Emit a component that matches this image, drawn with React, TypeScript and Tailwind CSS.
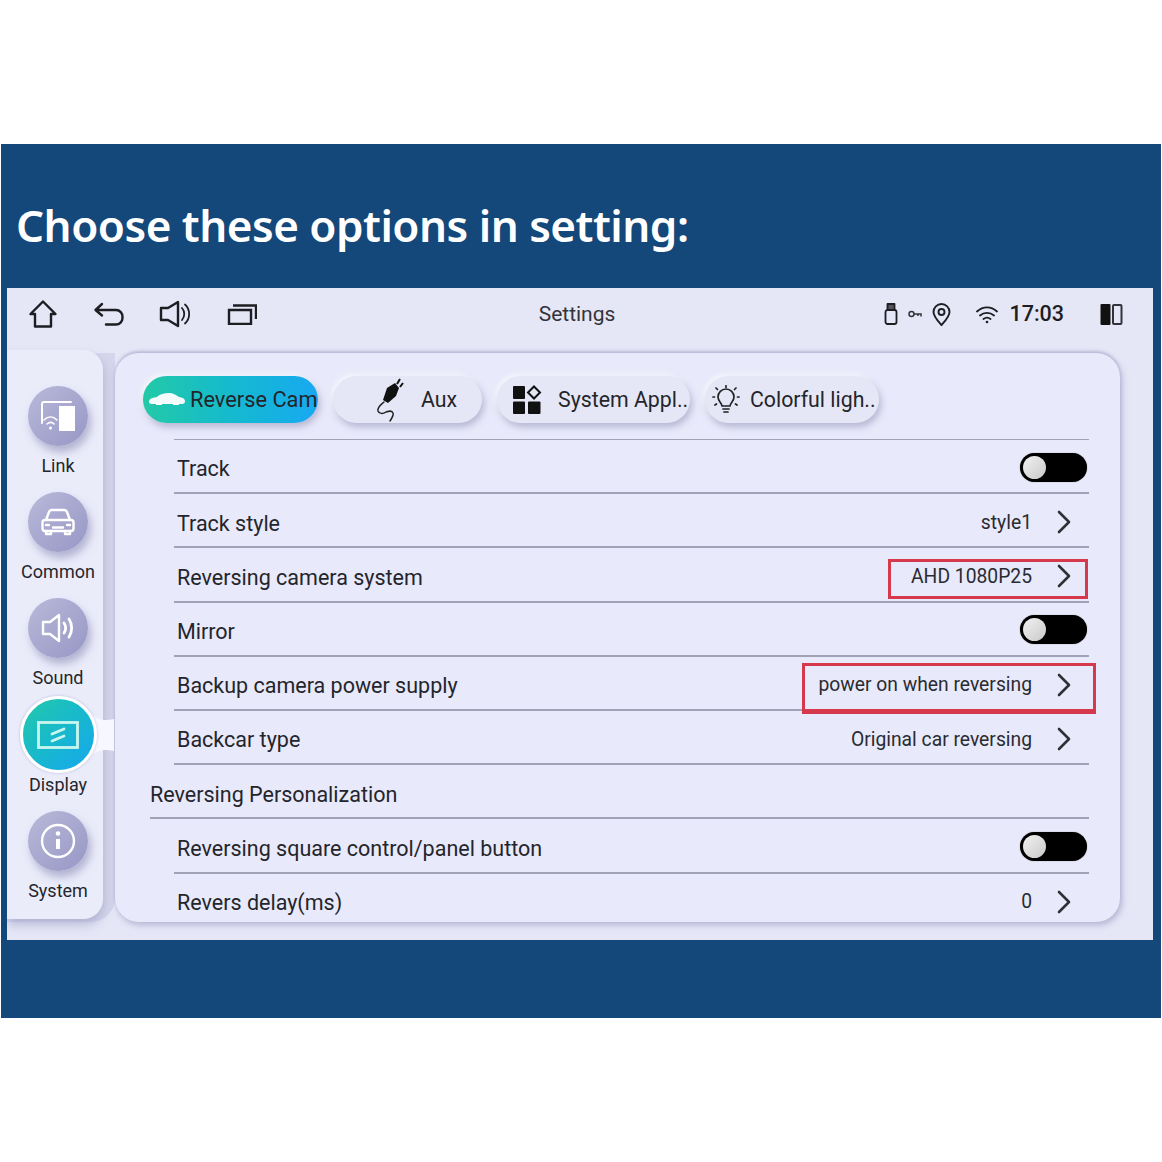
import React from "react";

const Chevron = () => (
  <svg width="16" height="26" viewBox="0 0 16 26" fill="none" stroke="#2f3036" strokeWidth="2.6" strokeLinecap="round" strokeLinejoin="round">
    <path d="M3 3l10 10L3 23" />
  </svg>
);

const Toggle = () => (
  <div className="w-[67px] h-[29px] mt-[2px] rounded-full bg-black flex items-center pl-[3px] shadow-[0_0_1px_#666]">
    <div className="w-[23px] h-[23px] rounded-full bg-gradient-to-br from-[#f2f2f2] to-[#c9c9c9]" />
  </div>
);

const Home = () => (
  <svg width="30" height="30" viewBox="0 0 30 30" fill="none" stroke="#1d1d22" strokeWidth="2.4" strokeLinejoin="round" strokeLinecap="round">
    <path d="M2.5 15L15 2.5 27.5 15H23v12.5H7V15z" />
  </svg>
);
const Back = () => (
  <svg width="32" height="26" viewBox="0 0 32 26" fill="none" stroke="#1d1d22" strokeWidth="2.4" strokeLinejoin="round" strokeLinecap="round">
    <path d="M9 3L2.5 9 9 14.5M3 9h20a6.5 6.5 0 0 1 6.5 7v1a6.5 6.5 0 0 1-6.5 6.5H13" />
  </svg>
);
const Speaker = () => (
  <svg width="32" height="28" viewBox="0 0 32 28" fill="none" stroke="#1d1d22" strokeWidth="2.4" strokeLinejoin="round" strokeLinecap="round">
    <path d="M2 8h7l10-6v24L9 20H2z" />
    <path d="M23 8c3 3.5 3 8.500 0 12M26 4.500c5.500 5 5.500 14 0 19" strokeWidth="1.8" />
  </svg>
);
const Recents = () => (
  <svg width="30" height="22" viewBox="0 0 30 22" fill="none" stroke="#1d1d22" strokeWidth="2.4">
    <path d="M2 7h22v14H2z" />
    <path d="M6 2.500h23V16" />
  </svg>
);
const Usb = () => (
  <svg width="14" height="22" viewBox="0 0 14 22" fill="none" stroke="#1d1d22" strokeWidth="1.8" strokeLinejoin="round">
    <path d="M3.500 1h7v6h-7z" fill="#55565e" />
    <rect x="1.500" y="7" width="11" height="14" rx="2" />
  </svg>
);
const Key = () => (
  <svg width="14" height="8" viewBox="0 0 14 8" fill="none" stroke="#33343a" strokeWidth="1.500">
    <circle cx="3.500" cy="4" r="2.500" />
    <path d="M6 4h7v2.500M10 4v2" />
  </svg>
);
const Pin = () => (
  <svg width="19" height="23" viewBox="0 0 19 23" fill="none" stroke="#1d1d22" strokeWidth="1.900">
    <path d="M9.500 22C5 17 1.500 13.500 1.500 9a8 8 0 0 1 16 0c0 4.500-3.500 8-8 13z" strokeLinejoin="round" />
    <circle cx="9.500" cy="9" r="3" />
  </svg>
);
const Wifi = () => (
  <svg width="22" height="19" viewBox="0 0 22 19" fill="none" stroke="#1d1d22" strokeWidth="1.800" strokeLinecap="round">
    <path d="M1 6.500c6-5.500 14-5.500 20 0M4 10.500c4-3.500 10-3.500 14 0M7.500 14c2-1.500 5-1.500 7 0" />
    <circle cx="11" cy="17" r="1.300" fill="#1d1d22" stroke="none" />
  </svg>
);
const Split = () => (
  <svg width="23" height="23" viewBox="0 0 23 23">
    <rect x="0.500" y="1" width="10" height="21" rx="1" fill="#111" />
    <rect x="13" y="2" width="8.500" height="19" rx="1" fill="none" stroke="#33343a" strokeWidth="2" />
  </svg>
);

const LinkIcon = () => (
  <svg width="40" height="36" viewBox="0 0 40 36" fill="none">
    <path d="M4 25V6a2 2 0 0 1 2-2h27" stroke="#fff" strokeWidth="2" strokeLinecap="round" />
    <rect x="21" y="8" width="16" height="25" fill="#fff" />
    <path d="M6 22c4-4 9-4 13 0M9 26c2.500-2 5-2 7 0" stroke="#fff" strokeWidth="1.600" strokeLinecap="round" />
    <circle cx="12.500" cy="30" r="1.500" fill="#fff" />
  </svg>
);
const CarIcon = () => (
  <svg width="36" height="30" viewBox="0 0 36 30" fill="none" stroke="#fff" strokeWidth="2.400" strokeLinejoin="round" strokeLinecap="round">
    <path d="M6 13l3-8a3 3 0 0 1 3-2h12a3 3 0 0 1 3 2l3 8" />
    <rect x="2.500" y="13" width="31" height="11" rx="2.500" />
    <path d="M6 24v3h5v-3M25 24v3h5v-3M13 20.500h10" />
    <path d="M6 18h3M27 18h3" />
  </svg>
);
const SoundIcon = () => (
  <svg width="34" height="32" viewBox="0 0 34 32" fill="none" stroke="#fff" strokeWidth="2.400" strokeLinejoin="round" strokeLinecap="round">
    <path d="M2 10h7l9-7v26l-9-7H2z" />
    <path d="M23 11c2 3 2 7 0 10M28 7c3.500 5 3.500 13 0 18" strokeWidth="2.800" />
  </svg>
);
const DisplayIcon = () => (
  <svg width="42" height="28" viewBox="0 0 42 28" fill="none" stroke="#c9f5ee">
    <rect x="1.500" y="1.500" width="39" height="25" strokeWidth="2.800" />
    <path d="M15 13l12-5M15 20l12-5" strokeWidth="2.800" strokeLinecap="round" />
  </svg>
);
const InfoIcon = () => (
  <svg width="36" height="36" viewBox="0 0 36 36" fill="none" stroke="#fff">
    <circle cx="18" cy="18" r="16" strokeWidth="2.400" />
    <path d="M18 16v10" strokeWidth="4" />
    <circle cx="18" cy="10.500" r="2.300" fill="#fff" stroke="none" />
  </svg>
);

const WhiteCar = () => (
  <svg width="38" height="16" viewBox="0 0 38 16" fill="#fff">
    <path d="M1 9c1-3 5-3.500 8-4 3-3 7-4 12-4 4 0 7 2 10 4 3 .5 6 1.500 6 4 0 2-1 3-3 3H4C2 12 .5 11 1 9z" opacity="0.95" />
    <path d="M8 13a3 3 0 0 1 6 0zM25 13a3 3 0 0 1 6 0z" />
  </svg>
);
const Plug = () => (
  <svg width="30" height="46" viewBox="0 0 30 46" fill="none">
    <path d="M8 23L12 11 20 6 24 11 21 19 13 26z" fill="#111" />
    <path d="M22 7l3-5M25 10l3-4" stroke="#111" strokeWidth="2" />
    <path d="M9 25c-3 3-7 5-6 9 1 3 5 3 8 1 3-1 6-2 7 1 1 2-1 5-3 8" stroke="#222" strokeWidth="1.500" strokeLinecap="round" />
  </svg>
);
const Blocks = () => (
  <svg width="30" height="30" viewBox="0 0 30 30" fill="#111">
    <rect x="1" y="1" width="12" height="13" rx="1" />
    <rect x="1" y="16.500" width="12" height="12.500" rx="1" />
    <rect x="16" y="16.500" width="12.500" height="12.500" rx="1" />
    <path d="M22 1.500l6 6-6 6-6-6z" fill="none" stroke="#111" strokeWidth="2" />
  </svg>
);
const Bulb = () => (
  <svg width="28" height="30" viewBox="0 0 28 30" fill="none" stroke="#222" strokeWidth="1.700" strokeLinecap="round">
    <path d="M10 21c0-3-4-4.500-4-9a8 8 0 0 1 16 0c0 4.500-4 6-4 9z" strokeLinejoin="round" />
    <path d="M11 24h6M12 27h4" />
    <path d="M14 .8v1.500M4 3l1.500 1.500M24 3l-1.500 1.500M1 12h1.500M25.500 12H27M3 20l1.500-1M25 20l-1.500-1" />
  </svg>
);

const tabBase =
  "h-[47px] rounded-full bg-[#e6e7f6] flex items-center overflow-hidden text-[21.3px] whitespace-nowrap text-[#24252b] shadow-[2px_4px_7px_rgba(140,140,180,0.55),-2px_-2px_5px_rgba(255,255,255,0.8)]";

const SideItem = ({ label, icon, active }: { label: string; icon: React.ReactNode; active?: boolean }) => (
  <div className="h-[106.2px] flex flex-col items-center">
    {active ? (
      <div className="relative z-10 w-[60px] h-[60px] flex items-center justify-center">
        <svg className="absolute left-[62px] top-[8px]" width="24" height="44" viewBox="0 0 30 44" fill="#f7f8ff" preserveAspectRatio="none">
          <path d="M0 0C10 8 20 8 30 6V38C20 36 10 36 0 44z" />
        </svg>
        <div className="relative w-[77px] h-[77px] shrink-0 rounded-full border-[3px] border-white bg-gradient-to-br from-[#25c8a8] to-[#1aa6ee] flex items-center justify-center shadow-[0_0_3px_rgba(130,130,180,0.5)]">
          {icon}
        </div>
      </div>
    ) : (
      <div className="w-[60px] h-[60px] rounded-full bg-gradient-to-br from-[#b9b9d9] to-[#9797c6] flex items-center justify-center shadow-[3px_6px_9px_rgba(130,130,175,0.55)]">
        {icon}
      </div>
    )}
    <div className="mt-[8px] h-[24px] leading-[24px] text-[18px] text-[#25262c]">{label}</div>
  </div>
);

const Row = ({
  label,
  value,
  toggle,
  section,
  children,
}: {
  label: string;
  value?: string;
  toggle?: boolean;
  section?: boolean;
  children?: React.ReactNode;
}) => (
  <div className={`relative shrink-0 h-[54.2px] flex items-center border-b-2 border-[#a1a2b6] ${section ? "" : "ml-[24px] pl-[3px]"}`}>
    <div className="flex-1 text-[21.5px] text-[#24252b] pt-[7px]">{label}</div>
    {toggle && (
      <div className="pr-[2px]">
        <Toggle />
      </div>
    )}
    {value !== undefined && (
      <div className="flex items-center pr-[17px] text-[19.3px] text-[#2a2b31] pt-[4px]">
        <span className="pt-[2px]">{value}</span>
        <span className="ml-[24px] flex">
          <Chevron />
        </span>
      </div>
    )}
    {children}
  </div>
);

export default function App() {
  return (
    <div className="w-[1162px] h-[1162px] bg-white pt-[144px] font-['Roboto',sans-serif]">
      <div className="ml-px w-[1160px] h-[874px] bg-[#14487a] flex flex-col">
        <div className="h-[144px] shrink-0 pl-[15px] pt-[52px]">
          <h1 className="text-[44px] tracking-[-0.5px] leading-[58px] font-semibold text-white font-['Noto_Sans',sans-serif] whitespace-nowrap">
            Choose these options in setting:
          </h1>
        </div>
        <div className="ml-[6px] w-[1146px] h-[652px] bg-[#e5e6f6] flex flex-col overflow-hidden">
          <div className="h-[65px] shrink-0 flex items-start pt-[12px]">
            <div className="w-[400px] flex items-center pl-[21px] h-[28px]">
              <Home />
              <span className="ml-[35px] flex"><Back /></span>
              <span className="ml-[34px] flex"><Speaker /></span>
              <span className="ml-[36px] flex"><Recents /></span>
            </div>
            <div className="w-[340px] text-center text-[21px] leading-[28px] text-[#33343a]">Settings</div>
            <div className="flex-1 flex items-center justify-end pr-[30px] h-[28px]">
              <Usb />
              <span className="ml-[10px] flex"><Key /></span>
              <span className="ml-[10px] flex"><Pin /></span>
              <span className="ml-[25px] flex"><Wifi /></span>
              <span className="ml-[11px] text-[21.5px] font-medium text-[#1d1d22]">17:03</span>
              <span className="ml-[36px] flex"><Split /></span>
            </div>
          </div>

          <div className="flex-1 flex min-h-0 pb-[18px]">
            <div className="w-[108px] shrink-0 bg-[#d5d6ec] rounded-br-[24px]">
              <div className="w-[96px] h-full -mt-[3px] bg-[#ebecfa] rounded-tr-[20px] rounded-br-[20px] pt-[36px] pl-[6px] shadow-[1px_6px_10px_rgba(150,150,190,0.5)] flex flex-col items-center">
                <SideItem label="Link" icon={<LinkIcon />} />
                <SideItem label="Common" icon={<CarIcon />} />
                <SideItem label="Sound" icon={<SoundIcon />} />
                <SideItem label="Display" active icon={<DisplayIcon />} />
                <SideItem label="System" icon={<InfoIcon />} />
              </div>
            </div>

            <div className="w-[1005px] shrink-0 bg-[#e8e9fa] rounded-[24px] overflow-hidden pl-[35px] pr-[31px] pt-[23px] flex flex-col shadow-[0_-2px_3px_rgba(170,170,205,0.7),2px_3px_6px_rgba(150,150,190,0.6)]">
              <div className="flex gap-[15px] -ml-[7px] shrink-0">
                <div className={`${tabBase} w-[175px] !bg-transparent bg-gradient-to-r from-[#23c9a6] to-[#1aa8f2] pl-[5px] text-[#0c3b58]`}>
                  <WhiteCar />
                  <span className="ml-[4px] pt-[1px] text-[21.8px]">Reverse Cam</span>
                </div>
                <div className={`${tabBase} w-[149px] pl-[42px]`}>
                  <Plug />
                  <span className="ml-[16px] pt-[1px]">Aux</span>
                </div>
                <div className={`${tabBase} w-[193px] pl-[15px]`}>
                  <Blocks />
                  <span className="ml-[16px] pt-[1px]">System Appl..</span>
                </div>
                <div className={`${tabBase} w-[174px] pl-[7px]`}>
                  <Bulb />
                  <span className="ml-[10px] pt-[1px]">Colorful ligh..</span>
                </div>
              </div>
              <div className="mt-[16px] ml-[24px] h-[1px] shrink-0 bg-[#a1a2b6]" />
              <Row label="Track" toggle />
              <Row label="Track style" value="style1" />
              <Row label="Reversing camera system" value="AHD 1080P25">
                <div className="absolute top-[11px] right-[1px] w-[200px] h-[40px] border-[3px] border-[#d5394b]" />
              </Row>
              <Row label="Mirror" toggle />
              <Row label="Backup camera power supply" value="power on when reversing">
                <div className="absolute top-[6px] -right-[7px] w-[294px] h-[51px] border-[3px] border-b-[5px] border-[#d5394b] z-10" />
              </Row>
              <Row label="Backcar type" value="Original car reversing" />
              <Row label="Reversing Personalization" section />
              <Row label="Reversing square control/panel button" toggle />
              <Row label="Revers delay(ms)" value="0" />
            </div>
          </div>
        </div>
      </div>
    </div>
  );
}
